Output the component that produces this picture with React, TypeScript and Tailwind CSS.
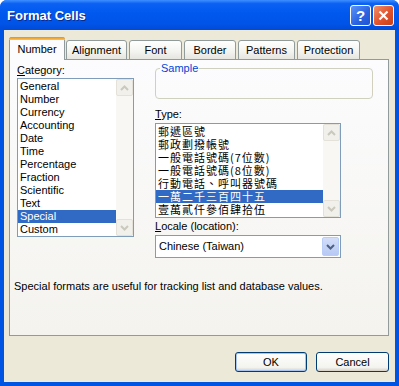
import React from 'react';

const categories = [
    'General',
    'Number',
    'Currency',
    'Accounting',
    'Date',
    'Time',
    'Percentage',
    'Fraction',
    'Scientific',
    'Text',
    'Special',
    'Custom',
];

const types = [
    '郵遞區號',
    '郵政劃撥帳號',
    '一般電話號碼(7位數)',
    '一般電話號碼(8位數)',
    '行動電話、呼叫器號碼',
    '一萬二千三百四十五',
    '壹萬貳仟參佰肆拾伍',
];

const tabs = [
    { label: 'Alignment', w: 'w-[61px]' },
    { label: 'Font', w: 'w-[53px]' },
    { label: 'Border', w: 'w-[52px]' },
    { label: 'Patterns', w: 'w-[57px]' },
    { label: 'Protection', w: 'w-[63px]' },
];

const ui = "font-['Liberation_Sans',Arial,sans-serif] text-[11px] leading-[13px] text-black";
const cjk = "font-['Noto_Sans_CJK_TC','Liberation_Sans',sans-serif]";

const Chevron = ({ up, color }: { up?: boolean; color: string }) => (
    <svg width="9" height="6" viewBox="0 0 9 6">
        <path
            d={up ? 'M1 5 L4.5 1.5 L8 5' : 'M1 1 L4.5 4.5 L8 1'}
            fill="none"
            stroke={color}
            strokeWidth="2"
        />
    </svg>
);

const ArrowBtn = ({ up }: { up?: boolean }) => (
    <div className="w-[17px] h-[17px] rounded-[2px] border border-[#e4e2d8] bg-[#f1f0ea] flex items-center justify-center">
        <Chevron up={up} color="#cbc9bd" />
    </div>
);

const Scrollbar = () => (
    <div className="w-[17px] h-full flex flex-col justify-between bg-[#f8f7f3]">
        <ArrowBtn up />
        <ArrowBtn />
    </div>
);

export default function App() {
    return (
        <div className={`w-[399px] h-[386px] flex flex-col bg-[#0054e3] rounded-t-[7px] overflow-hidden ${ui}`}>
            {/* title bar */}
            <div className="h-[30px] shrink-0 flex items-center pl-[7px] pr-[5px] bg-[linear-gradient(180deg,#3f8fff_0%,#0b61f3_12%,#0058ee_45%,#0054e6_80%,#004ad8_100%)]">
                <span className="flex-1 text-white font-bold text-[13px] font-['Liberation_Sans',Arial,sans-serif] [text-shadow:1px_1px_0_#0a2a8a]">
                    Format Cells
                </span>
                <div className="w-[21px] h-[21px] rounded-[3px] border border-white bg-[linear-gradient(135deg,#5b95f8,#2a62e0_60%,#1f55d4)] flex items-center justify-center text-white font-bold text-[15px]">
                    ?
                </div>
                <div className="w-[21px] h-[21px] ml-[2px] rounded-[3px] border border-white bg-[linear-gradient(135deg,#f0906a,#e0522a_55%,#c8401a)] flex items-center justify-center">
                    <svg width="11" height="11" viewBox="0 0 11 11">
                        <path d="M1.5 1.5 L9.5 9.5 M9.5 1.5 L1.5 9.5" stroke="white" strokeWidth="2.2" />
                    </svg>
                </div>
            </div>

            {/* body */}
            <div className="flex-1 mx-[4px] mb-[4px] bg-[#ece9d8] pt-[7px] pl-[5px] pr-[6px] flex flex-col">
                {/* tab strip */}
                <div className="h-[23px] flex items-end">
                    <div className="relative z-10 w-[56px] h-[23px] -mr-[1px] border border-b-0 border-[#919b9c] rounded-t-[3px] bg-[#fcfcfe] flex flex-col">
                        <div className="h-[3px] -mx-[1px] -mt-[1px] rounded-t-[3px] bg-[linear-gradient(180deg,#e68b2c,#ffc83c)]" />
                        <div className="flex-1 flex items-center justify-center pb-[1px]">Number</div>
                    </div>
                    {tabs.map(t => (
                        <div
                            key={t.label}
                            className={`${t.w} h-[20px] ml-[2px] border border-[#919b9c] rounded-t-[3px] bg-[linear-gradient(180deg,#ffffff,#f3f3ef_60%,#e6e5df)] flex items-center justify-center`}
                        >
                            {t.label}
                        </div>
                    ))}
                </div>

                {/* panel */}
                <div className="-mt-[1px] h-[277px] border border-[#919b9c] bg-[linear-gradient(180deg,#fcfcfe,#f4f3ee)] flex flex-col">
                    <div className="flex pl-[7px]">
                        {/* category column */}
                        <div className="pt-[4px]">
                            <div>
                                <span className="underline">C</span>ategory:
                            </div>
                            <div className="mt-[1px] w-[117px] h-[159px] border border-[#7f9db9] bg-white flex">
                                <div className="flex-1 pt-[1px]">
                                    {categories.map(c => (
                                        <div
                                            key={c}
                                            className={`h-[13px] pl-[2px] ${c === 'Special' ? 'bg-[#316ac5] text-white' : ''}`}
                                        >
                                            {c}
                                        </div>
                                    ))}
                                </div>
                                <Scrollbar />
                            </div>
                        </div>

                        {/* right column */}
                        <div className="ml-[21px] pt-[2px]">
                            <fieldset className="w-[218px] h-[37px] border border-[#d0d0bf] rounded-[4px]">
                                <legend className="ml-[4px] px-[1px] text-[#0046d5]">Sample</legend>
                            </fieldset>
                            <div className="mt-[9px]">
                                <span className="underline">T</span>ype:
                            </div>
                            <div className="mt-[2px] w-[186px] h-[95px] border border-[#7f9db9] bg-white flex">
                                <div className={`flex-1 pt-[1px] ${cjk} text-[11px] tracking-[1px]`}>
                                    {types.map(t => (
                                        <div
                                            key={t}
                                            className={`h-[13px] leading-[13px] pl-[2px] whitespace-nowrap ${t === '一萬二千三百四十五' ? 'bg-[#316ac5] text-white' : ''}`}
                                        >
                                            {t}
                                        </div>
                                    ))}
                                </div>
                                <Scrollbar />
                            </div>
                            <div className="mt-[2px]">
                                <span className="underline">L</span>ocale (location):
                            </div>
                            <div className="mt-[2px] w-[186px] h-[23px] border border-[#7f9db9] bg-white flex items-center pl-[3px] pr-[1px]">
                                <span className="flex-1">Chinese (Taiwan)</span>
                                <div className="w-[17px] h-[19px] rounded-[2px] border border-[#b9cdf6] bg-[linear-gradient(180deg,#d2def9,#b7c9f4)] flex items-center justify-center">
                                    <Chevron color="#4d6185" />
                                </div>
                            </div>
                        </div>
                    </div>

                    <div className="mt-[22px] pl-[4px]">
                        Special formats are useful for tracking list and database values.
                    </div>
                </div>

                {/* buttons */}
                <div className="mt-[16px] flex justify-end gap-[9px]">
                    <button className="w-[72px] h-[20px] rounded-[3px] border border-[#003c74] bg-[linear-gradient(180deg,#ffffff,#f3f3ef_80%,#d6d0c5)] shadow-[inset_0_0_0_1px_#a8c4f0]">
                        OK
                    </button>
                    <button className="w-[73px] h-[20px] rounded-[3px] border border-[#003c74] bg-[linear-gradient(180deg,#ffffff,#f3f3ef_80%,#d6d0c5)]">
                        Cancel
                    </button>
                </div>
            </div>
        </div>
    );
}
